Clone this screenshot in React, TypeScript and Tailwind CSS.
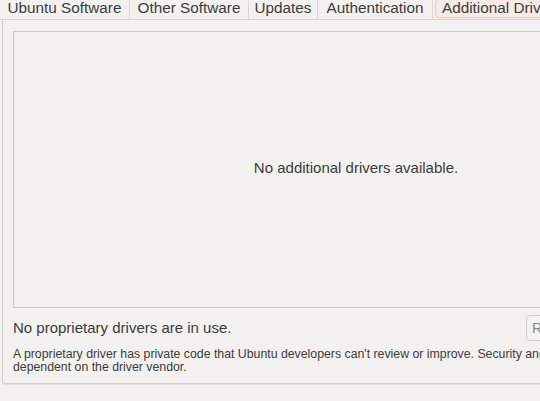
import React from 'react';

const tabs = [
  { label: 'Ubuntu Software', w: 'w-[130px]' },
  { label: 'Other Software', w: 'w-[119px]' },
  { label: 'Updates', w: 'w-[69px]' },
  { label: 'Authentication', w: 'w-[115px]' },
];

const App = () => {
  return (
    <div
      className="w-[540px] h-[401px] overflow-hidden bg-[#f2f1f0] text-[#3c3c3c]"
      style={{ fontFamily: '"Liberation Sans", "Noto Sans", sans-serif' }}
    >
      {/* Tabs */}
      <div className="flex items-stretch h-[20px] w-[700px] border-b border-[#d3d1ce]">
        {tabs.map((t) => (
          <div
            key={t.label}
            className={`${t.w} shrink-0 flex items-center justify-center border-r border-[#dad8d5] text-[15.3px] leading-none pb-[3px]`}
          >
            {t.label}
          </div>
        ))}
        <div className="ml-[2px] shrink-0 w-[160px] h-[19px] -mt-[1px] flex items-center pl-[6px] text-[15.3px] leading-none pb-[2px] bg-[#f6ebe7] border border-[#f1c8b9] rounded-[4px]">
          Additional Drivers
        </div>
      </div>

      {/* Notebook page */}
      <div className="ml-[2px] w-[700px] h-[364px] border-l border-b border-[#cfcdca] rounded-bl-[3px] pl-[10px] pt-[11px] shadow-[0_1px_0_#e4e3e1]">
        <div className="w-[686px] h-[277px] border border-[#cbc9c6] flex items-center justify-center pb-[2px]">
          <span className="text-[15px]">No additional drivers available.</span>
        </div>

        <div className="flex items-center h-[26px] mt-[7px]">
          <span className="w-[513px] shrink-0 text-[15px] pt-[1px]">No proprietary drivers are in use.</span>
          <button className="w-[80px] h-[26px] border border-[#cfcdca] rounded-[4px] bg-[#f4f3f2] text-[14px] text-[#8a8886] text-left pl-[5px]">
            Revert
          </button>
        </div>

        <p className="mt-[7px] text-[12.3px] leading-[13px] whitespace-nowrap">
          A proprietary driver has private code that Ubuntu developers can't review or improve. Security and other updates are
          <br />
          dependent on the driver vendor.
        </p>
      </div>
    </div>
  );
};

export default App;
